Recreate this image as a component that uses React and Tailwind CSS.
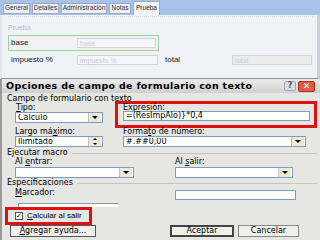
import React from "react";

const F = { fontFamily: '"DejaVu Sans", Verdana, sans-serif' };
const L = { fontFamily: '"Liberation Sans", Arial, sans-serif' };

function Combo({ w, text, spin }) {
  return (
    <div className={`flex items-center h-[11px] bg-white border border-[#7f9db9] ${w}`}>
      <span className="flex-1 pl-[2px] text-[8px] leading-none text-black whitespace-nowrap overflow-hidden">{text}</span>
      {spin ? (
        <div className="w-[13px] h-[9px] flex flex-col bg-[#ece9d8] border-l border-[#c0c0c0] mr-[1px]">
          <div className="flex-1 flex items-center justify-center"><div className="w-0 h-0 border-l-[2px] border-r-[2px] border-b-[2px] border-l-transparent border-r-transparent border-b-black" /></div>
          <div className="flex-1 flex items-center justify-center"><div className="w-0 h-0 border-l-[2px] border-r-[2px] border-t-[2px] border-l-transparent border-r-transparent border-t-black" /></div>
        </div>
      ) : (
        <div className="w-[13px] h-[9px] flex items-center justify-center bg-[#ece9d8] border-l border-[#c0c0c0] mr-[1px]">
          <div className="w-0 h-0 border-l-[3px] border-r-[3px] border-t-[3px] border-l-transparent border-r-transparent border-t-black" />
        </div>
      )}
    </div>
  );
}

function Tab({ w, label, active }) {
  return (
    <div
      className={`${w} shrink-0 flex items-center justify-center text-[6.5px] leading-none border border-[#9aa8bf] ${
        active ? "h-[14px] bg-[#f2f4fa] border-b-0 text-[#222]" : "h-[11px] mt-[2px] bg-[#eef0f4] text-[#333]"
      }`}
    >
      {label}
    </div>
  );
}

export default function App() {
  return (
    <div className="w-[320px] h-[240px] overflow-hidden bg-[#e6e6e3] flex flex-col" style={F}>
      {/* Top form */}
      <div className="h-[79px] shrink-0 flex flex-col bg-[#a8c2ea]" style={L}>
        <div className="h-[15px] shrink-0 flex items-start gap-[2px] pl-[3px] pt-[1px]">
          <Tab w="w-[27px]" label="General" />
          <Tab w="w-[27px]" label="Detalles" />
          <Tab w="w-[46px]" label="Administración" />
          <Tab w="w-[22px]" label="Notas" />
          <Tab w="w-[27px]" label="Prueba" active />
        </div>
        <div className="flex-1 bg-[#f0f2f8] border-l-2 border-r-[3px] border-b border-l-[#dfe4ee] border-r-[#c9cfdb] border-b-[#8a8f98] flex flex-col pl-[6px] pr-[4px]">
          <div className="h-[1px] border-t border-dotted border-[#cfd6e4] mt-[1px]" />
          <div className="text-[7px] leading-none text-[#b8bcc6] mt-[7px]">Prueba</div>
          <div className="mt-[4px] w-[151px] h-[16px] border border-[#9fd39a] flex items-center">
            <span className="w-[68px] pl-[2px] text-[8px] leading-none text-[#222]">base</span>
            <div className="w-[79px] h-[10px] border border-[#cfd3da] bg-[#f6f7fa] text-[7px] leading-none text-[#c8ccd4] pl-[2px] flex items-center">base</div>
          </div>
          <div className="mt-[4px] flex items-center h-[10px]">
            <span className="w-[69px] pl-[3px] text-[8px] leading-none text-[#222]">impuesto %</span>
            <div className="w-[81px] h-[10px] border border-[#cfd3da] bg-[#f6f7fa] text-[7px] leading-none text-[#c8ccd4] pl-[2px] flex items-center">impuesto %</div>
            <span className="ml-[7px] w-[67px] text-[8px] leading-none text-[#222]">total</span>
            <div className="w-[80px] h-[10px] border border-[#cfd3da] bg-[#ececec] text-[7px] leading-none text-[#c8ccd4] pl-[2px] flex items-center">total</div>
          </div>
        </div>
      </div>

      {/* Dialog */}
      <div className="flex-1 flex flex-col border-l-2 border-[#9a9a9a]">
        <div className="h-[14px] shrink-0 bg-gradient-to-b from-[#ececec] to-[#d0d0d0] flex items-center pl-[4px] pr-[5px]">
          <span className="flex-1 text-[9.5px] font-bold leading-none text-black tracking-[0.3px]">Opciones de campo de formulario con texto</span>
          <div className="w-[12px] h-[10px] bg-[#d8dde6] border border-[#a0a8b8] rounded-[2px] flex items-center justify-center text-[8px] font-bold text-[#555] leading-none">?</div>
          <div className="ml-[2px] w-[17px] h-[11px] bg-[#e05a4a] border border-[#b03020] rounded-[2px] flex items-center justify-center text-[9px] text-white leading-none">✕</div>
        </div>
        <div className="flex-1 flex flex-col pl-[5px] text-[8px] leading-[8px] text-black">
          <div className="mt-[2px] h-[8px]">Campo de formulario con texto</div>
          <div className="flex h-[44px]">
            <div className="w-[108px] shrink-0 flex flex-col pl-[8px] pt-[1px]">
              <span className="h-[8px] pl-[1px]"><u>T</u>ipo:</span>
              <Combo w="w-[88px]" text="Cálculo" />
              <span className="h-[8px] mt-[5px]">Largo má<u>x</u>imo:</span>
              <Combo w="w-[88px]" text="Ilimitado" spin />
            </div>
            <div className="flex flex-col -mt-[2px]">
              <div className="w-[202px] h-[27px] border-[3px] border-[#e01010] flex flex-col pl-[5px] pr-[4px]">
                <span className="h-[7px] leading-[7px]">Expresió<u>n</u>:</span>
                <div className="h-[10px] bg-white border border-[#7f9db9] flex items-center pl-[2px]">=(ResImpAlo)}*0,4</div>
              </div>
              <div className="pl-[8px] h-[8px]">Forma<u>t</u>o de número:</div>
              <div className="pl-[8px]"><Combo w="w-[183px]" text="#.##0,00" /></div>
            </div>
          </div>
          <div className="flex items-center mt-[2px] h-[8px]">
            <span>Ejecutar macro</span>
            <div className="ml-[4px] flex-1 h-0 border-t border-[#c4c4c4] mr-[3px]" />
          </div>
          <div className="flex mt-[1px] pl-[8px]">
            <div className="w-[160px] shrink-0 flex flex-col">
              <span className="h-[8px]">Al <u>e</u>ntrar:</span>
              <div className="mt-[1px]"><Combo w="w-[119px]" text="" /></div>
            </div>
            <div className="flex flex-col">
              <span className="h-[8px]">Al <u>s</u>alir:</span>
              <div className="mt-[1px]"><Combo w="w-[118px]" text="" /></div>
            </div>
          </div>
          <div className="flex items-center mt-[1px] h-[8px]">
            <span>Especificaciones</span>
            <div className="ml-[4px] flex-1 h-0 border-t border-[#c4c4c4] mr-[3px]" />
          </div>
          <div className="flex h-[38px]">
            <div className="w-[168px] shrink-0 flex flex-col">
              <span className="h-[8px] pl-[8px] mt-[2px]"><u>M</u>arcador:</span>
              <div className="ml-[11px] mt-[6px] w-[100px] h-[4px] border-l border-t border-[#7f9db9] bg-white" />
              <div className="-ml-[2px] w-[87px] h-[18px] border-[3px] border-[#e01010] flex items-center pl-[7px]">
                <div className="w-[8px] h-[8px] bg-white border border-[#555] flex items-center justify-center text-[7px] leading-none">✓</div>
                <span className="ml-[4px] whitespace-nowrap" style={L}><u>C</u>alcular al salir</span>
              </div>
            </div>
            <div className="flex flex-col">
              <div className="mt-[3px] w-[121px] h-[10px] bg-white border border-[#7f9db9]" />
            </div>
          </div>
          <div className="flex pl-[3px]">
            <div className="w-[86px] h-[12px] border border-[#555] bg-[#f0f0ec] flex items-center justify-center"><u>A</u>gregar ayuda...</div>
            <div className="ml-[74px] w-[64px] h-[12px] border-2 border-[#444] bg-[#f0f0ec] flex items-center justify-center">Aceptar</div>
            <div className="ml-[4px] w-[61px] h-[12px] border border-[#888] bg-[#f0f0ec] flex items-center justify-center">Cancelar</div>
          </div>
        </div>
      </div>
    </div>
  );
}
